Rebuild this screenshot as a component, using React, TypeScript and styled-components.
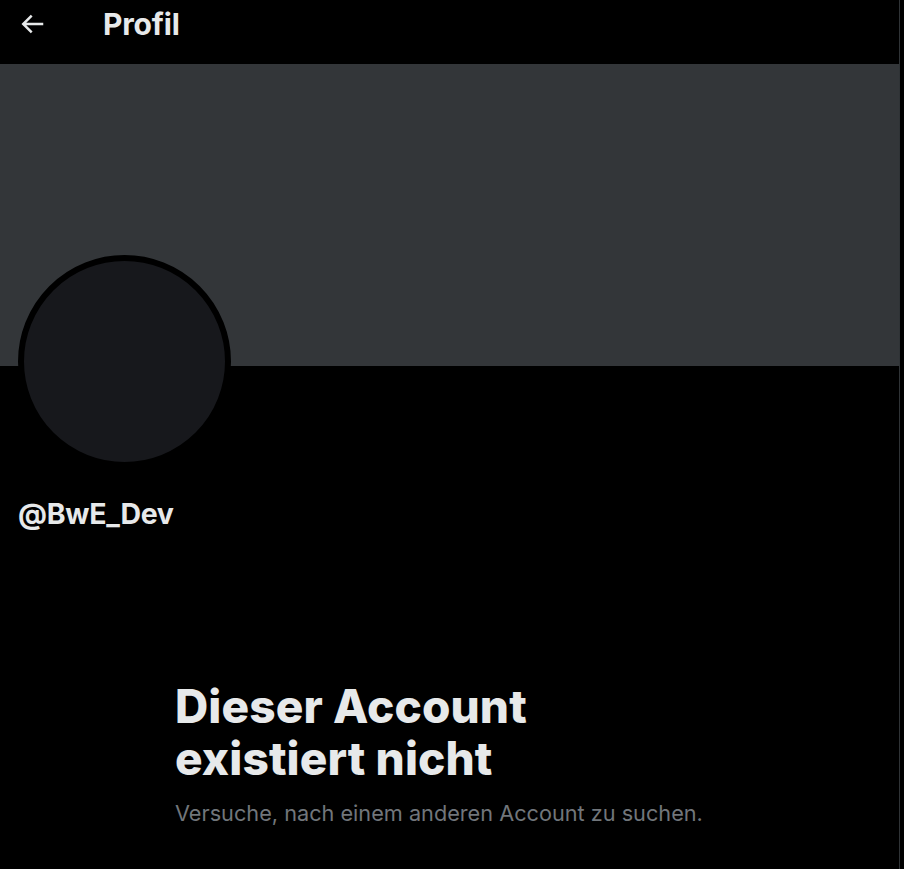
import React from "react";
import styled, { createGlobalStyle } from "styled-components";

const Global = createGlobalStyle`
  html, body { margin: 0; padding: 0; background: #000; }
  body { font-family: Inter, "Noto Sans", "Liberation Sans", sans-serif; color: #e7e9ea; }
`;

const Page = styled.div`
  width: 904px;
  min-height: 869px;
  background: #000;
`;

const Column = styled.main`
  width: 899px;
  min-height: 869px;
  border-right: 1px solid #2f3336;
  display: flex;
  flex-direction: column;
`;

const Header = styled.header`
  height: 64px;
  display: flex;
  align-items: center;
  padding-left: 17px;
`;

const BackButton = styled.button`
  width: 30px;
  height: 30px;
  padding: 0;
  border: 0;
  background: none;
  color: #e7e9ea;
  display: flex;
  align-items: center;
  justify-content: center;
  margin-top: -16px;
  cursor: pointer;
`;

const Title = styled.h1`
  margin: -16px 0 0 56px;
  font-size: 30px;
  font-weight: 700;
  letter-spacing: -0.2px;
  color: #e7e9ea;
`;

const Banner = styled.div`
  height: 302px;
  background: #333639;
`;

const ProfileArea = styled.section`
  padding-left: 18px;
  display: flex;
  flex-direction: column;
`;

const Avatar = styled.div`
  width: 201px;
  height: 201px;
  margin-top: -111px;
  border-radius: 50%;
  border: 6px solid #000;
  background: #17181c;
`;

const Handle = styled.div`
  margin-top: 28px;
  font-size: 28.5px;
  font-weight: 700;
  line-height: 36px;
  letter-spacing: -0.3px;
  color: #e7e9ea;
`;

const Empty = styled.section`
  width: 549px;
  margin: 148px auto 0;
  display: flex;
  flex-direction: column;
`;

const EmptyTitle = styled.h2`
  margin: 0;
  font-size: 46px;
  font-weight: 800;
  line-height: 52px;
  letter-spacing: 0.1px;
  color: #e7e9ea;
`;

const EmptyText = styled.p`
  margin: 15px 0 0;
  font-size: 21.7px;
  line-height: 28px;
  color: #71767b;
`;

const ArrowIcon = () => (
  <svg width="30" height="30" viewBox="0 0 24 24" fill="currentColor" aria-hidden="true">
    <path d="M7.414 13l5.043 5.04-1.414 1.42L3.586 12l7.457-7.46 1.414 1.42L7.414 11H21v2H7.414z" />
  </svg>
);

export default function App() {
  return (
    <Page>
      <Global />
      <Column>
        <Header>
          <BackButton aria-label="Zurück">
            <ArrowIcon />
          </BackButton>
          <Title>Profil</Title>
        </Header>
        <Banner />
        <ProfileArea>
          <Avatar />
          <Handle>@BwE_Dev</Handle>
        </ProfileArea>
        <Empty>
          <EmptyTitle>
            Dieser Account
            <br />
            existiert nicht
          </EmptyTitle>
          <EmptyText>Versuche, nach einem anderen Account zu suchen.</EmptyText>
        </Empty>
      </Column>
    </Page>
  );
}
